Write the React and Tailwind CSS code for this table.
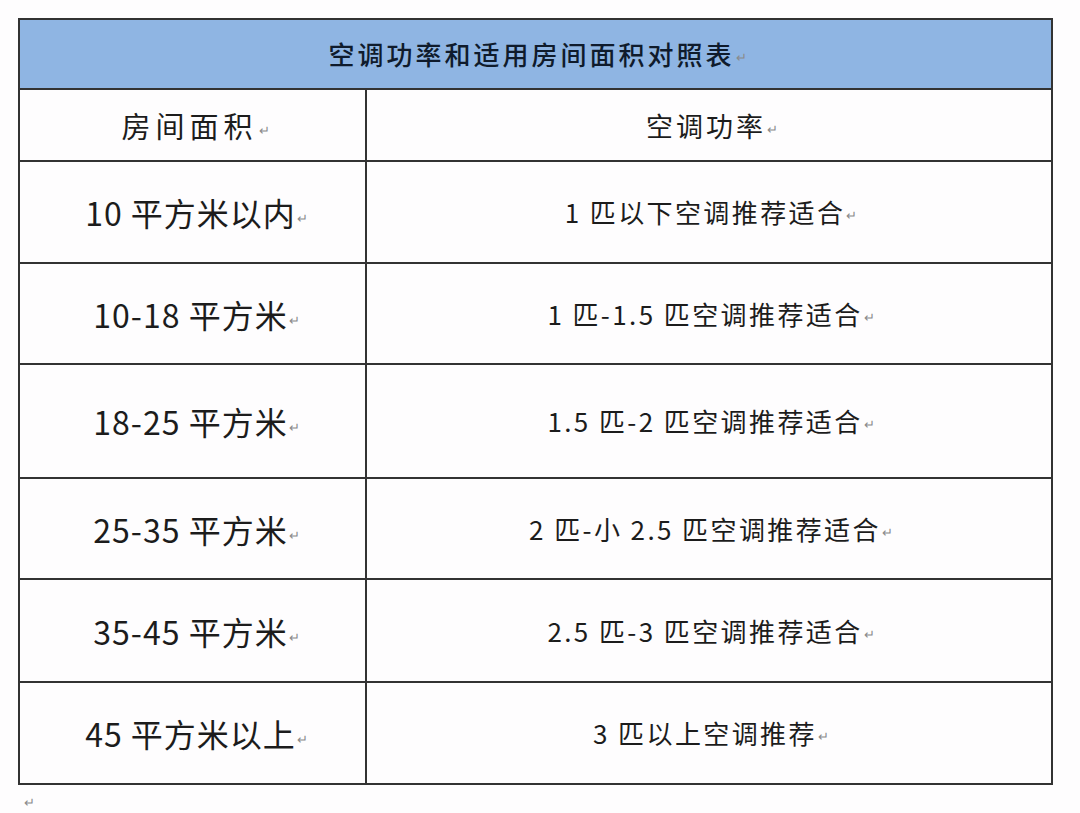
import React from "react";

const rows = [
  { area: "10 平方米以内", power: "1 匹以下空调推荐适合", h: "h-[102px]" },
  { area: "10-18 平方米", power: "1 匹-1.5 匹空调推荐适合", h: "h-[101px]" },
  { area: "18-25 平方米", power: "1.5 匹-2 匹空调推荐适合", h: "h-[114px]" },
  { area: "25-35 平方米", power: "2 匹-小 2.5 匹空调推荐适合", h: "h-[101px]" },
  { area: "35-45 平方米", power: "2.5 匹-3 匹空调推荐适合", h: "h-[103px]" },
  { area: "45 平方米以上", power: "3 匹以上空调推荐", h: "h-[102px]" },
];

const Mark = () => (
  <span className="text-[13px] font-normal text-[#8a8a8a] tracking-normal self-end mb-[4px] ml-[1px]">↵</span>
);

export default function App() {
  return (
    <div
      className="min-h-[813px] bg-[#fefdfe] pt-[18px] pl-[18px] text-[#1c1c1c]"
      style={{ fontFamily: '"Noto Sans CJK SC", "Noto Sans", sans-serif' }}
    >
      <div className="w-[1035px] border-2 border-[#333]">
        <div className="h-[68px] bg-[#8fb5e3] flex items-center justify-center">
          <span className="flex items-center text-[26px] font-medium tracking-[3px] text-[#0f1b2c] leading-none pl-[4px]">
            空调功率和适用房间面积对照表
            <Mark />
          </span>
        </div>
        <div className="h-[72px] border-t-2 border-[#333] grid grid-cols-[347px_1fr]">
          <div className="border-r-2 border-[#333] flex items-center justify-center pl-[6px]">
            <span className="flex items-center text-[29px] tracking-[5px] leading-none">
              房间面积
              <Mark />
            </span>
          </div>
          <div className="flex items-center justify-center pl-[6px]">
            <span className="flex items-center text-[27px] tracking-[3px] leading-none">
              空调功率
              <Mark />
            </span>
          </div>
        </div>
        {rows.map((r, i) => (
          <div key={i} className={`${r.h} border-t-2 border-[#333] grid grid-cols-[347px_1fr]`}>
            <div className="border-r-2 border-[#333] flex items-center justify-center pl-[8px]">
              <span className="flex items-center text-[32px] tracking-[1px] leading-none">
                {r.area}
                <Mark />
              </span>
            </div>
            <div className="flex items-center justify-center pl-[4px]">
              <span className="flex items-center text-[26px] tracking-[2.4px] leading-none">
                {r.power}
                <Mark />
              </span>
            </div>
          </div>
        ))}
      </div>
      <div className="pl-[6px] pt-[10px] text-[13px] text-[#8a8a8a] leading-none">↵</div>
    </div>
  );
}
